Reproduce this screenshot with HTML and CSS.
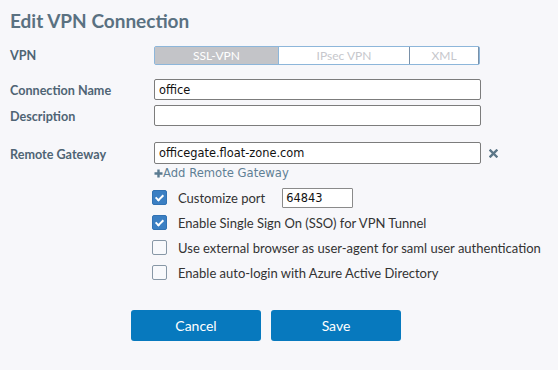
FILE: index.html
```html
<!DOCTYPE html>
<html lang="en">
<head>
    <meta charset="UTF-8">
    <title>Edit VPN Connection</title>
    <link rel="stylesheet" href="styles.css">
</head>
<body>
    <div class="dialog">
        <h1 class="title">Edit VPN Connection</h1>

        <!-- VPN type -->
        <div class="row row-vpn">
            <label class="label">VPN</label>
            <div class="segmented">
                <span class="seg seg-active seg-ssl">SSL-VPN</span>
                <span class="seg seg-ipsec">IPsec VPN</span>
                <span class="seg seg-xml">XML</span>
            </div>
        </div>

        <div class="row row-name">
            <label class="label">Connection Name</label>
            <input class="field" type="text" value="office">
        </div>

        <div class="row row-desc">
            <label class="label">Description</label>
            <input class="field" type="text" value="">
        </div>

        <div class="row row-gw">
            <label class="label">Remote Gateway</label>
            <input class="field" type="text" value="officegate.float-zone.com">
            <svg class="remove" width="9" height="9" viewBox="0 0 9 9">
                <path d="M1.5 1.5 L7.5 7.5 M7.5 1.5 L1.5 7.5" stroke="#5b7687" stroke-width="2.4" stroke-linecap="square"/>
            </svg>
        </div>

        <div class="add-link">
            <svg width="9" height="9" viewBox="0 0 9 9">
                <path d="M4.5 0.5 V8.5 M0.5 4.5 H8.5" stroke="#5a7b91" stroke-width="2.4"/>
            </svg>Add Remote Gateway
        </div>

        <div class="options">
            <div class="check-row">
                <span class="box checked"></span>
                <span class="check-label">Customize port</span>
                <input class="port" type="text" value="64843">
            </div>
            <div class="check-row">
                <span class="box checked"></span>
                <span class="check-label">Enable Single Sign On (SSO) for VPN Tunnel</span>
            </div>
            <div class="check-row">
                <span class="box"></span>
                <span class="check-label">Use external browser as user-agent for saml user authentication</span>
            </div>
            <div class="check-row">
                <span class="box"></span>
                <span class="check-label">Enable auto-login with Azure Active Directory</span>
            </div>
        </div>

        <div class="buttons">
            <button class="btn">Cancel</button>
            <button class="btn">Save</button>
        </div>
    </div>
</body>
</html>
```

FILE: styles.css
```css
body, html {
    margin: 0;
    padding: 0;
    background: #f7f7fa;
    font-family: 'Lato', sans-serif;
}

.dialog {
    padding: 9px 10px 0 10px;
}

.title {
    margin: 0;
    font-size: 19px;
    font-weight: 700;
    color: #5a7181;
    line-height: 24px;
}

/* Rows */
.row {
    display: flex;
    align-items: center;
}

.label {
    width: 144px;
    padding-top: 2px;
    font-size: 12.6px;
    font-weight: 700;
    color: #4f6474;
}

.row-vpn {
    margin-top: 13px;
}

.row-vpn .label {
    padding-top: 0;
}

.row-name {
    margin-top: 14px;
}

.row-desc {
    margin-top: 5px;
}

.row-gw {
    margin-top: 16px;
}

/* Segmented control */
.segmented {
    display: flex;
    height: 17px;
    border: 1px solid #8db6da;
    border-radius: 2px;
    background: #fff;
}

.seg {
    display: flex;
    align-items: center;
    justify-content: center;
    font-size: 12px;
    color: #c6c7cc;
}

.seg-ssl {
    width: 123px;
    background: #c3c4c8;
    color: #fff;
}

.seg-ipsec {
    width: 130px;
    border-left: 1px solid #8db6da;
}

.seg-xml {
    width: 68px;
    border-left: 1px solid #7990a8;
    border-right: 1px solid #7990a8;
}

/* Inputs */
.field {
    box-sizing: border-box;
    width: 327px;
    height: 21px;
    margin: 0;
    padding: 0 4px;
    border: 1px solid #7c7c7c;
    border-radius: 2px;
    background: #fff;
    font-family: 'DejaVu Sans', sans-serif;
    font-size: 11.4px;
    color: #111;
}

.row-gw .field {
    height: 22px;
}

.remove {
    margin-left: 8px;
}

.add-link {
    display: flex;
    align-items: center;
    margin: 2px 0 0 144px;
    font-family: 'DejaVu Sans', sans-serif;
    font-size: 11.6px;
    color: #5f7f95;
    line-height: 14px;
}

/* Checkbox options */
.options {
    margin: 7px 0 0 142px;
    display: flex;
    flex-direction: column;
    gap: 4px;
}

.check-row {
    display: flex;
    align-items: center;
    height: 21px;
}

.box {
    box-sizing: border-box;
    width: 15px;
    height: 15px;
    border: 1px solid #8797a6;
    border-radius: 2px;
    background: #f8f9fc;
    position: relative;
}

.box.checked {
    background: #3b7fc3;
    border-color: #3272b3;
}

.box.checked::after {
    content: "";
    position: absolute;
    left: 4px;
    top: 2px;
    width: 3px;
    height: 6px;
    border: solid #fff;
    border-width: 0 2px 2px 0;
    transform: rotate(45deg);
}

.check-label {
    margin-left: 11px;
    font-size: 13px;
    color: #333;
}

.port {
    box-sizing: border-box;
    width: 71px;
    height: 20px;
    margin: 0 0 0 17px;
    padding: 0 3px;
    border: 1px solid #8a8a8a;
    border-radius: 1px;
    background: #fff;
    font-family: 'DejaVu Sans', sans-serif;
    font-size: 11.4px;
    color: #111;
}

/* Buttons */
.buttons {
    display: flex;
    gap: 10px;
    margin: 27px 0 0 121px;
}

.btn {
    width: 130px;
    height: 31px;
    border: none;
    border-radius: 3px;
    background: #0779be;
    color: #fff;
    font-family: 'Lato', sans-serif;
    font-size: 14px;
}
```
